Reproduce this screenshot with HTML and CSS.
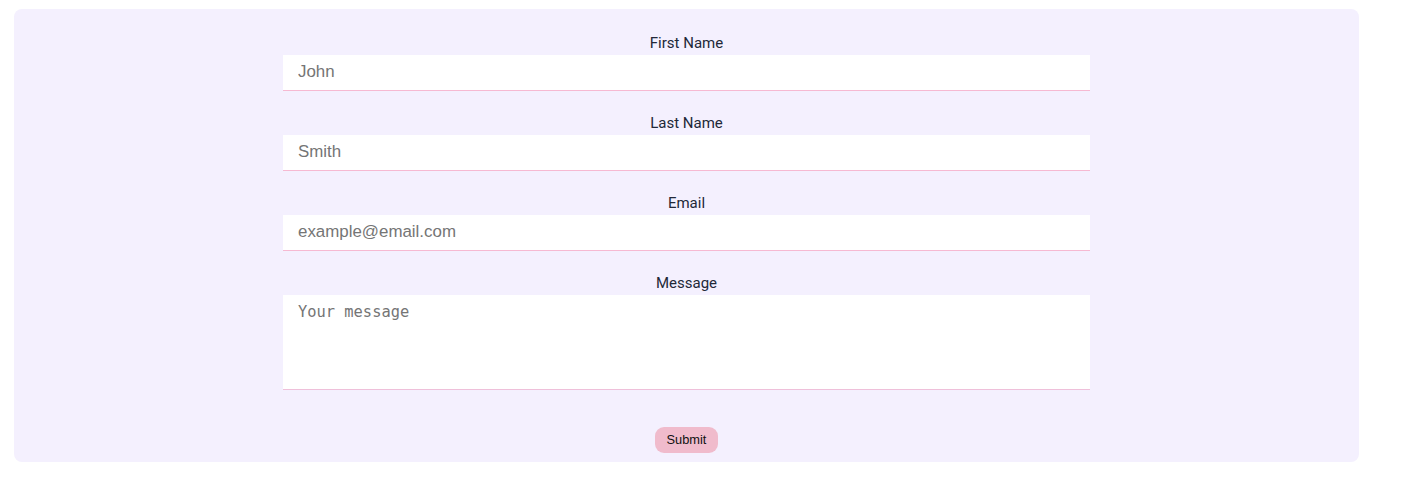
FILE: index.html
```html
<!DOCTYPE html>
<html>
<head>
<meta charset="utf-8">
<link rel="stylesheet" href="styles.css">
</head>
<body>
<div class="card">
  <form class="form">
    <div class="field">
      <label class="label" for="fn">First Name</label>
      <input class="input" id="fn" type="text" placeholder="John">
    </div>
    <div class="field">
      <label class="label" for="ln">Last Name</label>
      <input class="input" id="ln" type="text" placeholder="Smith">
    </div>
    <div class="field">
      <label class="label" for="em">Email</label>
      <input class="input" id="em" type="email" placeholder="example@email.com">
    </div>
    <div class="field">
      <label class="label" for="msg">Message</label>
      <textarea class="textarea" id="msg" placeholder="Your message"></textarea>
    </div>
    <div class="actions">
      <button class="submit" type="button">Submit</button>
    </div>
  </form>
</div>
</body>
</html>
```
FILE: styles.css
```css
html, body {
  margin: 0;
  padding: 0;
  background: #ffffff;
}
.card {
  margin: 9px 0 0 14px;
  width: 1345px;
  box-sizing: border-box;
  background: #f4f0fe;
  border-radius: 8px;
  padding: 26px 0 9px;
}
.form {
  display: flex;
  flex-direction: column;
  align-items: center;
}
.field {
  width: 60%;
  display: flex;
  flex-direction: column;
  margin-bottom: 24px;
}
.label {
  font-family: Roboto, "Noto Sans", sans-serif;
  font-size: 15px;
  line-height: 16px;
  color: #222838;
  text-align: center;
  margin-bottom: 4px;
}
.input {
  box-sizing: border-box;
  height: 36px;
  border: none;
  border-bottom: 1px solid #f6b9d2;
  background: #ffffff;
  padding: 0 15px 2px;
  font-family: "Liberation Sans", Arial, sans-serif;
  font-size: 16.9px;
  outline: none;
}
.textarea {
  box-sizing: border-box;
  height: 95px;
  border: none;
  border-bottom: 1px solid #efc0da;
  background: #ffffff;
  padding: 8px 15px 7px;
  font-family: "DejaVu Sans Mono", monospace;
  font-size: 15.4px;
  resize: none;
  outline: none;
  display: block;
}
.input::placeholder, .textarea::placeholder {
  color: #757575;
}
.actions {
  margin-top: 13px;
  display: flex;
  justify-content: center;
}
.submit {
  font-family: "Liberation Sans", Arial, sans-serif;
  font-size: 12.8px;
  line-height: 15px;
  color: #111111;
  background: #f0bbcc;
  border: none;
  border-radius: 9px;
  padding: 5px 12px 6px;
  height: 26px;
}
```
